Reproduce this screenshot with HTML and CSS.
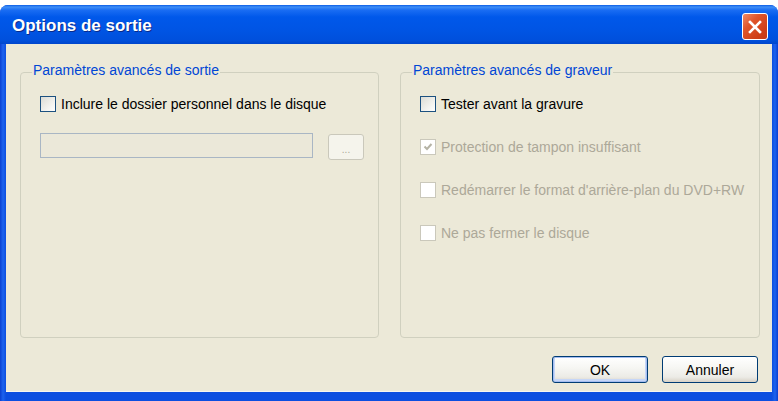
FILE: index.html
```html
<!DOCTYPE html>
<html lang="fr">
<head>
    <meta charset="UTF-8">
    <title>Options de sortie</title>
    <link rel="stylesheet" href="styles.css">
</head>
<body>
    <div class="window">
        <!-- barre de titre -->
        <div class="titlebar">
            <span class="title">Options de sortie</span>
            <button class="close" type="button" aria-label="Fermer">
                <svg width="14" height="14" viewBox="0 0 14 14">
                    <path d="M2 2 L12 12 M12 2 L2 12" stroke="#fff" stroke-width="2.6" stroke-linecap="square"/>
                </svg>
            </button>
        </div>

        <div class="content">
            <div class="groups">
                <!-- sortie -->
                <fieldset class="group group-left">
                    <legend>Paramètres avancés de sortie</legend>
                    <label class="option">
                        <span class="check"></span>
                        <span>Inclure le dossier personnel dans le disque</span>
                    </label>
                    <div class="path-row">
                        <div class="path-field"></div>
                        <button class="browse" type="button" disabled>...</button>
                    </div>
                </fieldset>

                <!-- graveur -->
                <fieldset class="group group-right">
                    <legend>Paramètres avancés de graveur</legend>
                    <label class="option">
                        <span class="check"></span>
                        <span>Tester avant la gravure</span>
                    </label>
                    <label class="option disabled">
                        <span class="check">
                            <svg width="12" height="12" viewBox="0 0 12 12">
                                <path d="M2.5 5.5 L5 8 L9.5 3" fill="none" stroke="#b5b3a5" stroke-width="2"/>
                            </svg>
                        </span>
                        <span>Protection de tampon insuffisant</span>
                    </label>
                    <label class="option disabled">
                        <span class="check"></span>
                        <span>Redémarrer le format d'arrière-plan du DVD+RW</span>
                    </label>
                    <label class="option disabled">
                        <span class="check"></span>
                        <span>Ne pas fermer le disque</span>
                    </label>
                </fieldset>
            </div>

            <div class="actions">
                <button class="btn btn-default" type="button">OK</button>
                <button class="btn" type="button">Annuler</button>
            </div>
        </div>
    </div>
</body>
</html>
```

FILE: styles.css
```css
body {
    margin: 0;
    background: #ffffff;
    font-family: "Liberation Sans", Arial, sans-serif;
    font-size: 14px;
}

.window {
    margin-top: 5px;
    height: 396px;
    display: flex;
    flex-direction: column;
    border-radius: 8px 8px 0 0;
    background: linear-gradient(to right, #0a3fd0 0, #1d63ee 3px, #0c4ee0 6px, #0c4ee0 772px, #1d63ee 775px, #0a3fd0 778px);
    padding-bottom: 9px;
    box-sizing: border-box;
    overflow: hidden;
}

.titlebar {
    height: 39px;
    flex-shrink: 0;
    display: flex;
    align-items: flex-start;
    padding: 13px 10px 0 12px;
    box-sizing: border-box;
    background: linear-gradient(to bottom, #0a5ce6 0, #3f8ff7 2px, #1a6df3 5px, #0058ea 12px, #0055e5 60%, #0050dc 90%, #0046cc 100%);
}

.title {
    color: #ffffff;
    font-weight: bold;
    font-size: 17px;
    line-height: 20px;
    margin-top: -2px;
    text-shadow: 1px 1px 0 #0a2a8a;
}

.close {
    margin-left: auto;
    margin-top: -5px;
    width: 26px;
    height: 27px;
    padding: 0;
    border: 1px solid #ffffff;
    border-radius: 3px;
    background: linear-gradient(135deg, #f08a68 0, #e0552b 35%, #cf3f17 75%, #c43a16 100%);
    display: flex;
    align-items: center;
    justify-content: center;
    box-sizing: border-box;
}

.content {
    flex: 1;
    margin: 0 6px;
    background: #ece9d8;
    border-bottom: 1px solid #f6f5ef;
    display: flex;
    flex-direction: column;
    padding: 18px 12px 0 14px;
    box-sizing: border-box;
}

.groups {
    display: flex;
    gap: 21px;
}

.group {
    margin: 0;
    height: 276px;
    box-sizing: border-box;
    border: 1px solid #d0d0bf;
    border-radius: 4px;
    padding: 14px 10px 0 19px;
    display: flex;
    flex-direction: column;
    align-items: flex-start;
}

.group-left {
    width: 359px;
}

.group-right {
    width: 360px;
    gap: 27px;
}

legend {
    color: #0046d5;
    line-height: 16px;
    padding: 0 1px 4px 1px;
    margin-left: -8px;
}

.option {
    display: flex;
    align-items: center;
    gap: 5px;
    height: 16px;
    line-height: 16px;
    color: #000000;
    white-space: nowrap;
}

.check {
    width: 16px;
    height: 16px;
    box-sizing: border-box;
    border: 1px solid #1c5180;
    background: linear-gradient(135deg, #dcdcd5 0, #f2f2ee 60%, #ffffff 100%);
    display: flex;
    align-items: center;
    justify-content: center;
}

.option.disabled {
    color: #aca899;
}

.option.disabled .check {
    border-color: #cac8bb;
    background: #ffffff;
}

.path-row {
    display: flex;
    align-items: flex-start;
    gap: 15px;
    margin-top: 21px;
}

.path-field {
    width: 273px;
    height: 25px;
    box-sizing: border-box;
    border: 1px solid #a9b6c4;
    background: #ebe8d9;
}

.browse {
    width: 36px;
    height: 26px;
    margin-top: 1px;
    padding: 0 0 4px 0;
    box-sizing: border-box;
    border: 1px solid #cac8bb;
    border-radius: 3px;
    background: #f5f4ec;
    color: #aca899;
    font-family: "Liberation Sans", Arial, sans-serif;
    font-size: 10px;
    line-height: 10px;
    display: flex;
    align-items: flex-end;
    justify-content: center;
}

.actions {
    display: flex;
    justify-content: flex-end;
    gap: 14px;
    margin-top: 18px;
    padding-right: 2px;
}

.btn {
    width: 96px;
    height: 27px;
    box-sizing: border-box;
    border: 1px solid #003c74;
    border-radius: 3px;
    background: linear-gradient(to bottom, #ffffff 0, #f7f7f4 40%, #ecebe6 80%, #d8d2c6 100%);
    font-family: "Liberation Sans", Arial, sans-serif;
    font-size: 14px;
    color: #000000;
    padding: 0;
}

.btn-default {
    box-shadow: inset 0 0 0 1px #a5bdf0, inset 0 -1px 0 2px #c6d6f7;
}
```
